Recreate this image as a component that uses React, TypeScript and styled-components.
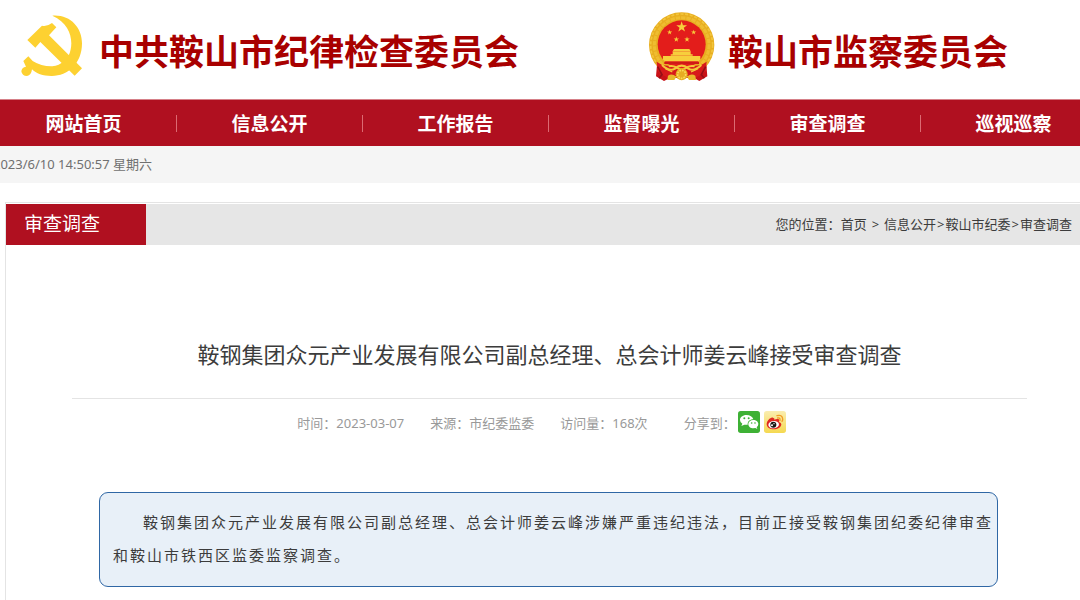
import React from "react";
import styled, { createGlobalStyle } from "styled-components";

const GlobalStyle = createGlobalStyle`
  *, *::before, *::after { box-sizing: border-box; }
  body {
    margin: 0;
    background: #fff;
    overflow-x: hidden;
    font-family: "Noto Sans", "Noto Sans CJK SC", sans-serif;
    font-size: 13px;
    color: #3c3c3c;
  }
  a { color: inherit; text-decoration: none; }
`;

const Page = styled.div`
  display: flex;
  flex-direction: column;
  min-height: 100vh;
`;

const Banner = styled.header`
  display: grid;
  grid-template-columns: 628px 1fr;
  align-items: center;
  height: 99px;
  padding: 0 20px 6px;
`;

const Organ = styled.div<{ $gap: number }>`
  display: flex;
  align-items: center;
  gap: ${(p) => p.$gap}px;
  svg { flex: none; display: block; }
`;

const OrganName = styled.h2`
  margin: 0;
  padding-top: 10px;
  font-size: 35px;
  line-height: 48px;
  font-weight: 700;
  color: #a80000;
  white-space: nowrap;
`;

const Nav = styled.nav`
  display: flex;
  height: 47px;
  padding-top: 1px;
  background: #b01020;
  border-top: 1px solid #d68088;
  overflow: hidden;
`;

const NavList = styled.ul`
  display: flex;
  margin: 0 0 0 -9px;
  padding: 0;
  list-style: none;
`;

const NavItem = styled.li`
  display: flex;
  align-items: center;
  flex: 0 0 186px;
  &::after {
    content: "";
    width: 1px;
    height: 17px;
    background: #dc6a72;
  }
`;

const NavLink = styled.a`
  flex: 1;
  padding-top: 1px;
  text-align: center;
  font-size: 19px;
  line-height: 45px;
  font-weight: 700;
  color: #fff;
`;

const DateBar = styled.div`
  height: 37px;
  background: #f5f5f5;
  line-height: 37px;
  color: #707070;
  overflow: hidden;
`;

const Clock = styled.time`
  display: block;
  margin-left: -7px;
`;

const Panel = styled.main`
  flex: 1;
  margin: 19px 0 0 5px;
  padding-top: 1px;
  border-top: 1px solid #e4e4e4;
  border-left: 1px solid #e4e4e4;
`;

const PanelHead = styled.div`
  display: flex;
  justify-content: space-between;
  height: 41px;
  background: #e6e6e6;
  line-height: 41px;
`;

const SectionName = styled.h3`
  width: 140px;
  margin: 0;
  padding-left: 18px;
  background: #b01020;
  color: #fff;
  font-size: 19px;
  font-weight: 400;
`;

const Crumbs = styled.div`
  padding-right: 8px;
  white-space: pre;
`;

const Arrow = styled.span<{ $pad: number }>`
  padding: 0 ${(p) => p.$pad}px;
`;

const Article = styled.article`
  margin: 0 53px 0 66px;
  padding-top: 91px;
`;

const Title = styled.h1`
  margin: 0;
  padding-bottom: 25px;
  border-bottom: 1px solid #e4e4e4;
  text-align: center;
  font-size: 22px;
  line-height: 37px;
  font-weight: 400;
`;

const Meta = styled.div`
  display: flex;
  justify-content: center;
  align-items: center;
  gap: 26px;
  height: 46px;
  padding-right: 16px;
  color: #999;
`;

const Share = styled.div`
  display: flex;
  align-items: center;
  gap: 2px;
  padding-left: 10px;
`;

const ShareButtons = styled.div`
  display: flex;
  gap: 4px;
`;

const ShareButton = styled.button`
  width: 22px;
  height: 22px;
  padding: 0;
  border: 0;
  background: none;
  svg { display: block; }
`;

const Notice = styled.section`
  margin: 47px 29px 12px 27px;
  padding: 13px 2px 14px 13px;
  border: 1px solid #2f67a5;
  border-radius: 9px;
  background: #e8f0f8;
`;

const NoticeText = styled.p`
  margin: 0;
  text-indent: 2em;
  font-size: 15px;
  line-height: 33px;
  letter-spacing: 2px;
`;

const STAR = "0,-10 2.3,-3.1 9.5,-3.1 3.7,1.2 5.9,8.1 0,3.9 -5.9,8.1 -3.7,1.2 -9.5,-3.1 -2.3,-3.1";

const PartyEmblem = () => (
  <svg width="64" height="64" viewBox="60 43 192 192" role="img" aria-label="党徽">
    <g fill="#fdd131">
      <path d="M157 45C210 41 246 80 246 128C246 190 202 227 154 226C129 226 108 219 96 206Q94 224 81 226Q66 226 64 212Q65 200 78 198L70 181L85 167L98 181Q125 198 157 197Q177 195 192 181L207 162C222 127 216 72 157 45Z" />
      <path d="M82 118L126 75Q142 78 156 67L169 80L147 104L246 203L224 225L121 124L106 141Z" />
    </g>
  </svg>
);

const StateEmblem = () => (
  <svg width="68" height="72" viewBox="24 34 204 216" role="img" aria-label="国徽">
    <path d="M52 184L48 230L72 244L90 235H162L178 244L202 230L198 184Z" fill="#c91218" />
    <circle cx="125" cy="136" r="98" fill="#e8ae20" />
    <circle cx="125" cy="136" r="93" fill="none" stroke="#f2c63c" strokeWidth="5" strokeDasharray="9 5" />
    <circle cx="125" cy="136" r="82" fill="none" stroke="#efbd30" strokeWidth="9" strokeDasharray="13 3" />
    <circle cx="125" cy="134" r="72" fill="#e31d1b" />
    <g fill="#f7cf3c">
      <polygon points={STAR} transform="translate(125 82) scale(1.7)" />
      <polygon points={STAR} transform="translate(89 98) scale(.8)" />
      <polygon points={STAR} transform="translate(161 98) scale(.8)" />
      <polygon points={STAR} transform="translate(109 119) scale(.85)" />
      <polygon points={STAR} transform="translate(141 119) scale(.85)" />
      <path d="M102 148H148L153 156H97ZM98 157H152V164H158V168H92V164H98ZM69 169H181V180L176 185H74L69 180Z" />
    </g>
    <path d="M73 187H177V193H73Z" fill="#cf1917" />
    <path d="M50 186L66 196L94 200L113 208H137L156 200L184 196L200 186L198 214L178 228L157 239L146 230H104L93 239L72 228L52 214Z" fill="#d7191b" />
    <g fill="none" stroke="#f4c83a" strokeWidth="6">
      <path d="M66 196Q88 217 105 207Q125 189 145 207Q162 217 184 196" />
      <path d="M86 200Q107 195 125 216Q143 195 164 200" />
      <path d="M76 207L97 217M174 207L153 217" strokeWidth="4" />
    </g>
    <circle cx="125" cy="224" r="18" fill="#e7ac22" />
    <circle cx="125" cy="224" r="12" fill="none" stroke="#f9da58" strokeWidth="5" strokeDasharray="5 3" />
    <path d="M84 228Q96 220 109 231L103 241H82ZM166 228Q154 220 141 231L147 241H168Z" fill="#e8b82c" />
    <path d="M53 201L66 225L57 236M197 201L184 225L193 236" fill="none" stroke="#960e16" strokeWidth="5" />
  </svg>
);

const WechatIcon = () => (
  <svg width="22" height="22" viewBox="0 0 66 66" aria-hidden="true">
    <rect width="66" height="66" rx="8" fill="#3eb135" />
    <path d="M25 12C14 12 6 19 6 27Q6 34 13 38L10 45L19 41Q24 42 29 41C28 32 35 25 46 25C44 17 36 12 25 12Z" fill="#fff" />
    <path d="M46 27C37 27 31 33 31 39C31 47 38 52 46 52L52 51L58 54L56 49Q61 45 61 39C61 32 54 27 46 27Z" fill="#fff" />
    <g fill="#3eb135">
      <circle cx="19" cy="22" r="3" /><circle cx="32" cy="22" r="3" />
      <circle cx="41" cy="36" r="2.5" /><circle cx="51" cy="36" r="2.5" />
    </g>
  </svg>
);

const WeiboIcon = () => (
  <svg width="22" height="22" viewBox="0 0 66 66" aria-hidden="true">
    <defs>
      <linearGradient id="weiboTile" x2="0" y2="1">
        <stop stopColor="#faedb0" /><stop offset="1" stopColor="#f5d951" />
      </linearGradient>
    </defs>
    <rect width="66" height="66" rx="8" fill="url(#weiboTile)" />
    <path d="M27 20C20 17 8 30 8 39C8 49 18 55 29 55C41 55 52 49 52 40Q52 35 45 33Q48 25 42 24Q37 23 31 26Q33 21 27 20Z" fill="#df2820" />
    <ellipse cx="29" cy="41" rx="16" ry="11" fill="#fff" transform="rotate(-7 29 41)" />
    <circle cx="28" cy="41" r="9" fill="#191512" />
    <circle cx="24" cy="43" r="3" fill="#fff" /><circle cx="30" cy="38" r="2" fill="#fff" />
    <path d="M39 14Q54 10 56 23Q57 27 54 31M41 21Q49 19 48 28" fill="none" stroke="#f29a25" strokeWidth="4" strokeLinecap="round" />
  </svg>
);

const sections = ["网站首页", "信息公开", "工作报告", "监督曝光", "审查调查", "巡视巡察"];

// Full-width punctuation used between labels and values.
const COLON = "\uFF1A";
const COMMA = "\uFF0C";

export default function App() {
  return (
    <Page>
      <GlobalStyle />
      <Banner>
        <Organ $gap={15}>
          <PartyEmblem />
          <OrganName>中共鞍山市纪律检查委员会</OrganName>
        </Organ>
        <Organ $gap={12}>
          <StateEmblem />
          <OrganName>鞍山市监察委员会</OrganName>
        </Organ>
      </Banner>
      <Nav>
        <NavList>
          {sections.map((name) => (
            <NavItem key={name}>
              <NavLink href="#">{name}</NavLink>
            </NavItem>
          ))}
        </NavList>
      </Nav>
      <DateBar>
        <Clock dateTime="2023-06-10T14:50:57">2023/6/10 14:50:57 星期六</Clock>
      </DateBar>
      <Panel>
        <PanelHead>
          <SectionName>审查调查</SectionName>
          <Crumbs>
            您的位置{COLON}<a href="#">首页</a><Arrow $pad={5}>&gt;</Arrow><a href="#">信息公开</a><Arrow $pad={1}>&gt;</Arrow><a href="#">鞍山市纪委</a><Arrow $pad={1}>&gt;</Arrow><a href="#">审查调查</a>
          </Crumbs>
        </PanelHead>
        <Article>
          <Title>鞍钢集团众元产业发展有限公司副总经理、总会计师姜云峰接受审查调查</Title>
          <Meta>
            <span>时间{COLON}2023-03-07</span>
            <span>来源{COLON}市纪委监委</span>
            <span>访问量{COLON}168次</span>
            <Share>
              <span>分享到{COLON}</span>
              <ShareButtons>
                <ShareButton type="button" aria-label="分享到微信"><WechatIcon /></ShareButton>
                <ShareButton type="button" aria-label="分享到微博"><WeiboIcon /></ShareButton>
              </ShareButtons>
            </Share>
          </Meta>
          <Notice>
            <NoticeText>
              鞍钢集团众元产业发展有限公司副总经理、总会计师姜云峰涉嫌严重违纪违法{COMMA}目前正接受鞍钢集团纪委纪律审查和鞍山市铁西区监委监察调查。
            </NoticeText>
          </Notice>
        </Article>
      </Panel>
    </Page>
  );
}
